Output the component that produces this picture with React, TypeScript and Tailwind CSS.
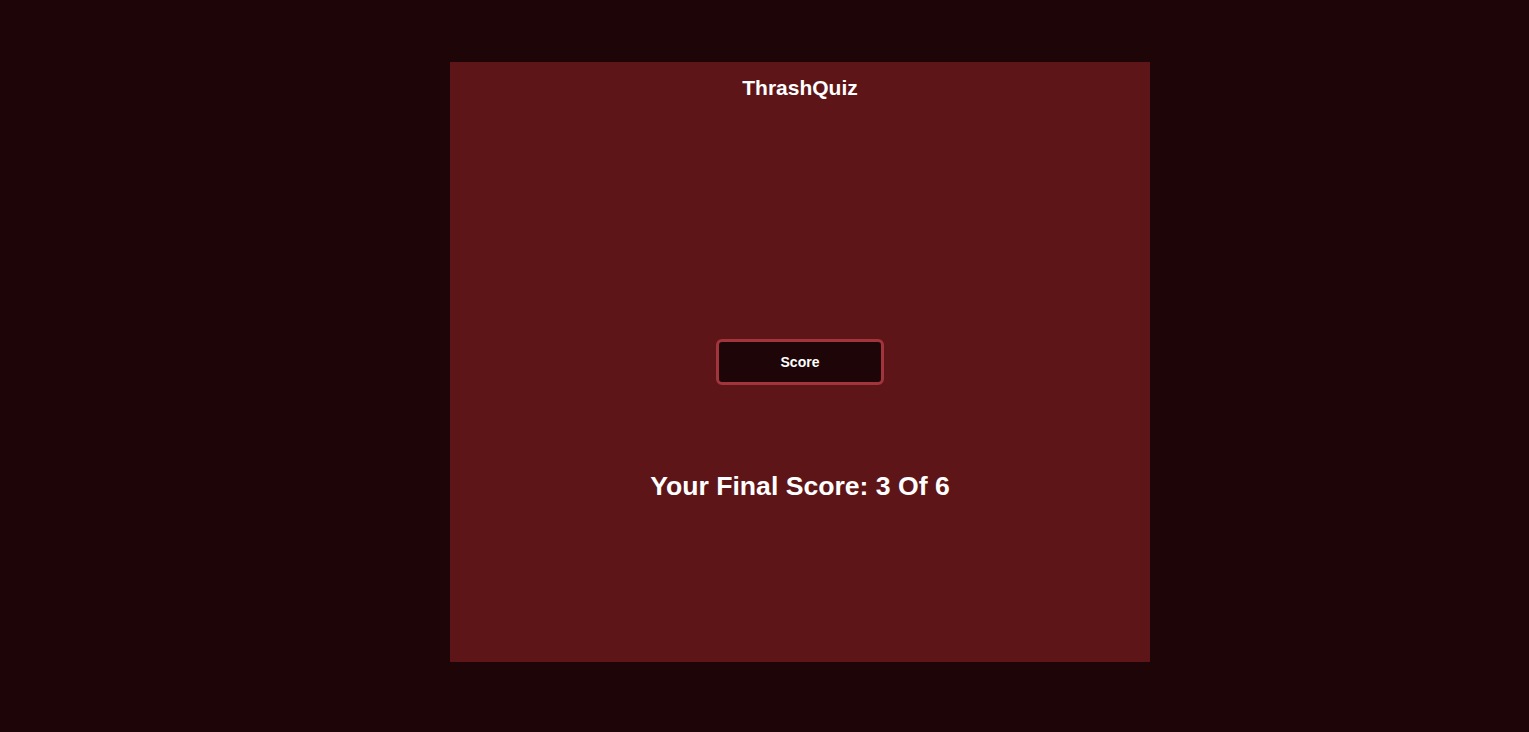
import React from 'react';

const App: React.FC = () => {
  const score = 3;
  const total = 6;

  return (
    <div className="min-h-screen w-full bg-[#1d0508] flex pl-[450px] pt-[62px] font-['Liberation_Sans',Arial,sans-serif]">
      <div className="w-[700px] h-[600px] bg-[#5e1518] flex flex-col items-center">
        <h1 className="mt-[14px] text-[21px] leading-[23px] font-bold text-white">ThrashQuiz</h1>

        <button className="mt-[240px] w-[168px] h-[46px] rounded-[6px] border-[3px] border-[#a2353c] bg-[#1d0508] text-white text-[14px] font-bold">
          Score
        </button>

        <p className="mt-[86px] text-[26.6px] leading-[30px] font-bold text-white">
          Your Final Score: {score} Of {total}
        </p>
      </div>
    </div>
  );
};

export default App;
